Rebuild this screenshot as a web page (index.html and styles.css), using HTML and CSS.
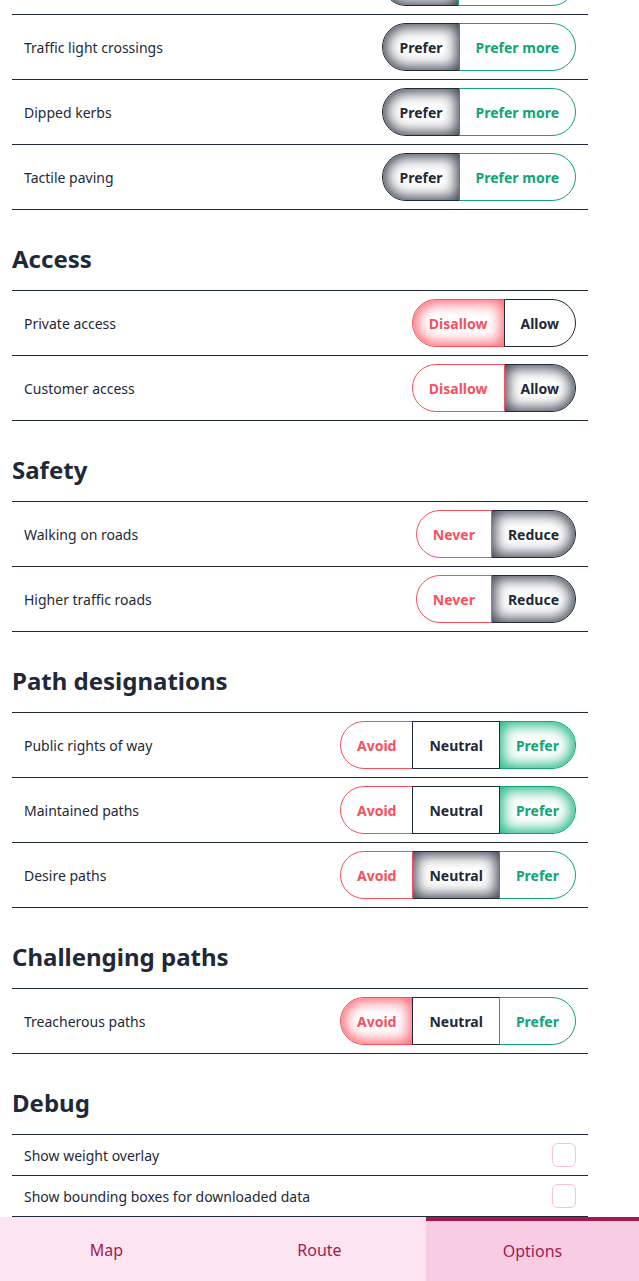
FILE: index.html
```html
<!DOCTYPE html>
<html lang="en">
<head>
<meta charset="utf-8">
<title>Options</title>
<link rel="stylesheet" href="styles.css">
</head>
<body>
<div class="app">
  <main class="scroll">
    <div class="content">
      <ul class="rows">
        <li class="row" aria-hidden="true"><span class="label"></span>
          <div class="seg"><span class="opt neu on w-prefer"></span><span class="opt pos w-more"></span></div>
        </li>
        <li class="row"><span class="label">Traffic light crossings</span>
          <div class="seg"><span class="opt neu on">Prefer</span><span class="opt pos">Prefer more</span></div>
        </li>
        <li class="row"><span class="label">Dipped kerbs</span>
          <div class="seg"><span class="opt neu on">Prefer</span><span class="opt pos">Prefer more</span></div>
        </li>
        <li class="row"><span class="label">Tactile paving</span>
          <div class="seg"><span class="opt neu on">Prefer</span><span class="opt pos">Prefer more</span></div>
        </li>
      </ul>

      <section class="group">
        <h2>Access</h2>
        <ul class="rows">
          <li class="row"><span class="label">Private access</span>
            <div class="seg"><span class="opt neg on">Disallow</span><span class="opt neu">Allow</span></div>
          </li>
          <li class="row"><span class="label">Customer access</span>
            <div class="seg"><span class="opt neg">Disallow</span><span class="opt neu on">Allow</span></div>
          </li>
        </ul>
      </section>

      <section class="group">
        <h2>Safety</h2>
        <ul class="rows">
          <li class="row"><span class="label">Walking on roads</span>
            <div class="seg"><span class="opt neg">Never</span><span class="opt neu on">Reduce</span></div>
          </li>
          <li class="row"><span class="label">Higher traffic roads</span>
            <div class="seg"><span class="opt neg">Never</span><span class="opt neu on">Reduce</span></div>
          </li>
        </ul>
      </section>

      <section class="group">
        <h2>Path designations</h2>
        <ul class="rows">
          <li class="row"><span class="label">Public rights of way</span>
            <div class="seg"><span class="opt neg">Avoid</span><span class="opt neu">Neutral</span><span class="opt pos on">Prefer</span></div>
          </li>
          <li class="row"><span class="label">Maintained paths</span>
            <div class="seg"><span class="opt neg">Avoid</span><span class="opt neu">Neutral</span><span class="opt pos on">Prefer</span></div>
          </li>
          <li class="row"><span class="label">Desire paths</span>
            <div class="seg"><span class="opt neg">Avoid</span><span class="opt neu on">Neutral</span><span class="opt pos">Prefer</span></div>
          </li>
        </ul>
      </section>

      <section class="group">
        <h2>Challenging paths</h2>
        <ul class="rows">
          <li class="row"><span class="label">Treacherous paths</span>
            <div class="seg"><span class="opt neg on">Avoid</span><span class="opt neu">Neutral</span><span class="opt pos">Prefer</span></div>
          </li>
        </ul>
      </section>

      <section class="group">
        <h2>Debug</h2>
        <ul class="rows">
          <li class="row small"><span class="label">Show weight overlay</span>
            <input type="checkbox" class="check" aria-label="Show weight overlay">
          </li>
          <li class="row small"><span class="label">Show bounding boxes for downloaded data</span>
            <input type="checkbox" class="check" aria-label="Show bounding boxes for downloaded data">
          </li>
        </ul>
      </section>
    </div>
  </main>

  <nav class="tabs">
    <a class="tab">Map</a>
    <a class="tab">Route</a>
    <a class="tab active">Options</a>
  </nav>
</div>
</body>
</html>
```

FILE: styles.css
```css
html, body {
  margin: 0;
  height: 100%;
}

body {
  font-family: "Noto Sans", "Open Sans", sans-serif;
  color: #1f2937;
  background: #ffffff;
}

.app {
  height: 100vh;
  display: flex;
  flex-direction: column;
}

.scroll {
  flex: 1;
  min-height: 0;
  overflow: hidden;
  display: flex;
  flex-direction: column;
  justify-content: flex-end;
}

.content {
  flex: none;
  width: 576px;
  padding: 0 12px;
}

.group h2 {
  margin: 33px 0 15px;
  font-size: 24px;
  line-height: 32px;
  font-weight: 700;
  color: #1f2937;
}

.rows {
  list-style: none;
  margin: 0;
  padding: 0;
  border-top: 1px solid #1f2937;
}

.row {
  display: flex;
  align-items: center;
  justify-content: space-between;
  height: 64px;
  padding: 0 12px;
  border-bottom: 1px solid #1f2937;
  font-size: 14px;
}

.row.small {
  height: 40px;
}

.label {
  color: #1f2937;
}

.seg {
  display: flex;
  height: 48px;
}

.opt {
  box-sizing: border-box;
  height: 48px;
  display: flex;
  align-items: center;
  padding: 0 16px;
  border: 1px solid;
  margin-left: -1px;
  background: #ffffff;
  font-size: 14px;
  font-weight: 700;
  position: relative;
  z-index: 1;
}

.opt:first-child {
  margin-left: 0;
  border-radius: 24px 0 0 24px;
}

.opt:last-child {
  border-radius: 0 24px 24px 0;
}

.opt.w-prefer {
  width: 77px;
}

.opt.w-more {
  width: 118px;
}

.neg {
  color: #f5515f;
  border-color: #f5515f;
}

.neu {
  color: #1f2937;
  border-color: #1f2937;
}

.pos {
  color: #10a572;
  border-color: #10a572;
}

.opt.on {
  z-index: 0;
}

.neg.on {
  box-shadow: inset 0 0 14px 3px #ff5e6c;
}

.neu.on {
  box-shadow: inset 0 0 14px 3px #3a404d;
}

.pos.on {
  box-shadow: inset 0 0 14px 3px #17b380;
}

.check {
  appearance: none;
  -webkit-appearance: none;
  margin: 0;
  box-sizing: border-box;
  width: 24px;
  height: 24px;
  border: 1px solid #f7c3d3;
  border-radius: 6px;
  background: #ffffff;
}

.tabs {
  flex: none;
  height: 64px;
  display: grid;
  grid-template-columns: repeat(3, 1fr);
}

.tab {
  box-sizing: border-box;
  display: flex;
  align-items: center;
  justify-content: center;
  padding-top: 1px;
  background: #fce4f0;
  color: #a21a52;
  font-size: 16px;
}

.tab.active {
  padding-top: 0;
  background: #f8cde3;
  border-top: 4px solid #a3184f;
}
```
